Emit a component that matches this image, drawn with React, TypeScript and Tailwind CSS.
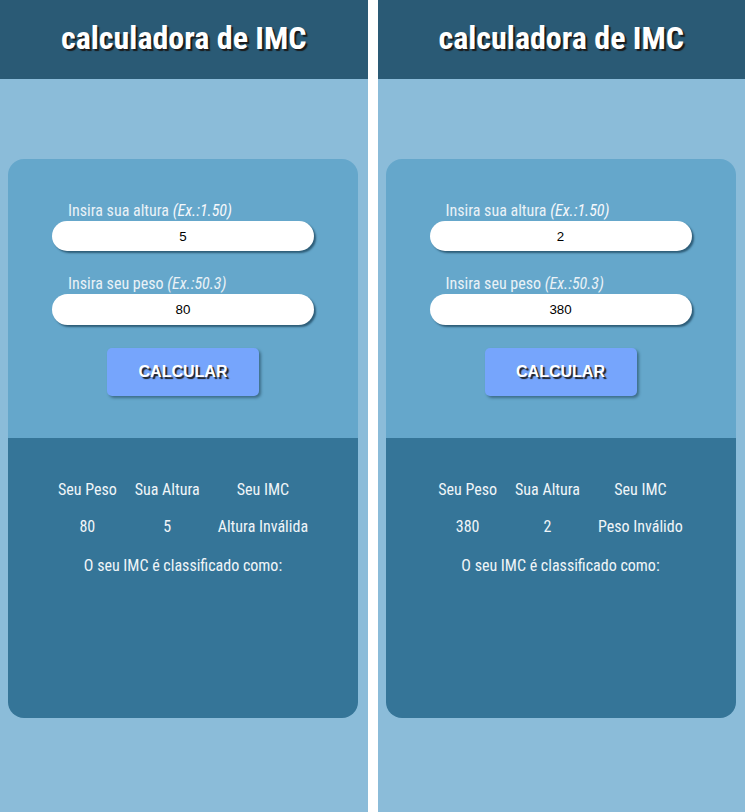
const Panel = ({ peso, altura, imc }: { peso: string; altura: string; imc: string }) => {
  return (
    <div className="flex-1 min-h-[812px] bg-[#8bbcd9] font-['Roboto',sans-serif] [font-stretch:condensed]">
      <header className="h-[79px] bg-[#2a5a75] flex items-center justify-center pb-[3px]">
        <h1 className="text-[32px] font-bold text-white [text-shadow:2px_2px_1px_#1a1a1a] leading-none">
          calculadora de IMC
        </h1>
      </header>
      <div className="ml-2 w-[350px] mt-[80px] rounded-2xl overflow-hidden">
        <div className="bg-[#65a7cb] h-[279px] flex flex-col items-center pt-[42px]">
          <div className="w-[262px]">
            <label className="block pl-4 text-[16px] text-[#eaf2f7] leading-[20px]">
              Insira sua altura <i className="text-[#f5f8fb]">(Ex.:1.50)</i>
            </label>
            <input
              className="w-full h-[30px] rounded-full bg-white text-center text-black text-[13.33px] font-['Arial','Liberation_Sans',sans-serif] [font-stretch:normal] shadow-[2px_2px_2px_#2e5d78] outline-none"
              defaultValue={altura}
            />
          </div>
          <div className="w-[262px] mt-[23px]">
            <label className="block pl-4 text-[16px] text-[#eaf2f7] leading-[20px]">
              Insira seu peso <i>(Ex.:50.3)</i>
            </label>
            <input
              className="w-full h-[31px] rounded-full bg-white text-center text-black text-[13.33px] font-['Arial','Liberation_Sans',sans-serif] [font-stretch:normal] shadow-[2px_2px_2px_#2e5d78] outline-none"
              defaultValue={peso}
            />
          </div>
          <button className="mt-[23px] w-[152px] h-[48px] rounded-[5px] bg-[#76a5fc] text-white font-bold text-[16px] font-['Arial','Liberation_Sans',sans-serif] [font-stretch:normal] [text-shadow:2px_2px_1px_#222] shadow-[2px_2px_3px_#3d6d88]">
            CALCULAR
          </button>
        </div>
        <div className="bg-[#357598] h-[280px] flex flex-col items-center pt-[33px] text-[16px] leading-[19px] text-[#f0f5f8]">
          <table className="border-separate border-spacing-0">
            <thead>
              <tr>
                <th className="font-normal px-[9px] py-[9px]">Seu Peso</th>
                <th className="font-normal px-[9px] py-[9px]">Sua Altura</th>
                <th className="font-normal px-[9px] py-[9px]">Seu IMC</th>
              </tr>
            </thead>
            <tbody>
              <tr>
                <td className="text-center px-[9px] py-[9px]">{peso}</td>
                <td className="text-center px-[9px] py-[9px]">{altura}</td>
                <td className="text-center px-[9px] py-[9px]">{imc}</td>
              </tr>
            </tbody>
          </table>
          <p className="mt-[11px]">O seu IMC é classificado como:</p>
        </div>
      </div>
    </div>
  );
};

export default function App() {
  return (
    <div className="flex gap-[10px] bg-white w-full min-h-screen">
      <Panel peso="80" altura="5" imc="Altura Inválida" />
      <Panel peso="380" altura="2" imc="Peso Inválido" />
    </div>
  );
}
